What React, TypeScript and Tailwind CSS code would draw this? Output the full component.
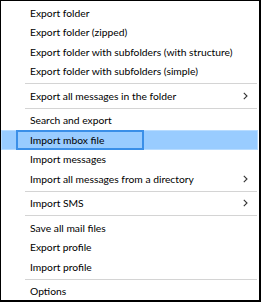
import React from 'react';

type Entry =
  | { kind: 'item'; label: string; submenu?: boolean; active?: boolean }
  | { kind: 'sep' };

const entries: Entry[] = [
  { kind: 'item', label: 'Export folder' },
  { kind: 'item', label: 'Export folder (zipped)' },
  { kind: 'item', label: 'Export folder with subfolders (with structure)' },
  { kind: 'item', label: 'Export folder with subfolders (simple)' },
  { kind: 'sep' },
  { kind: 'item', label: 'Export all messages in the folder', submenu: true },
  { kind: 'sep' },
  { kind: 'item', label: 'Search and export' },
  { kind: 'item', label: 'Import mbox file', active: true },
  { kind: 'item', label: 'Import messages' },
  { kind: 'item', label: 'Import all messages from a directory', submenu: true },
  { kind: 'sep' },
  { kind: 'item', label: 'Import SMS', submenu: true },
  { kind: 'sep' },
  { kind: 'item', label: 'Save all mail files' },
  { kind: 'item', label: 'Export profile' },
  { kind: 'item', label: 'Import profile' },
  { kind: 'sep' },
  { kind: 'item', label: 'Options' },
];

const Chevron = () => (
  <svg width="5" height="8" viewBox="0 0 5 8" className="shrink-0">
    <path d="M0.8 0.8 L4 4 L0.8 7.2" fill="none" stroke="#333" strokeWidth="1.1" />
  </svg>
);

export default function App() {
  return (
    <div className="w-[261px] h-[303px] bg-white overflow-hidden">
      <div
        className="w-[261px] h-[302px] border-l border-t border-r-2 border-b-2 border-black bg-white pt-[2px] pr-[1px]"
        style={{ fontFamily: 'Lato, "Noto Sans", sans-serif' }}
      >
        {entries.map((e, i) =>
          e.kind === 'sep' ? (
            <div key={i} className="h-[5px] flex items-center pl-[24px] pr-[1px]">
              <div className="h-px w-full bg-[#d4d4d4]" />
            </div>
          ) : e.active ? (
            <div key={i} className="relative h-[19.5px] bg-[#99ccff] border border-[#b8dcff] flex items-center">
              <div className="absolute left-[14px] top-[-1px] w-[128px] h-[20px] border-2 border-[#3a8fe8]" />
              <span className="relative pl-[28px] text-[10.3px] text-black leading-none">{e.label}</span>
            </div>
          ) : (
            <div key={i} className="h-[19.5px] flex items-center justify-between pl-[29px] pr-[10px]">
              <span className="text-[10.3px] text-black leading-none whitespace-nowrap">{e.label}</span>
              {e.submenu && <Chevron />}
            </div>
          )
        )}
      </div>
    </div>
  );
}
